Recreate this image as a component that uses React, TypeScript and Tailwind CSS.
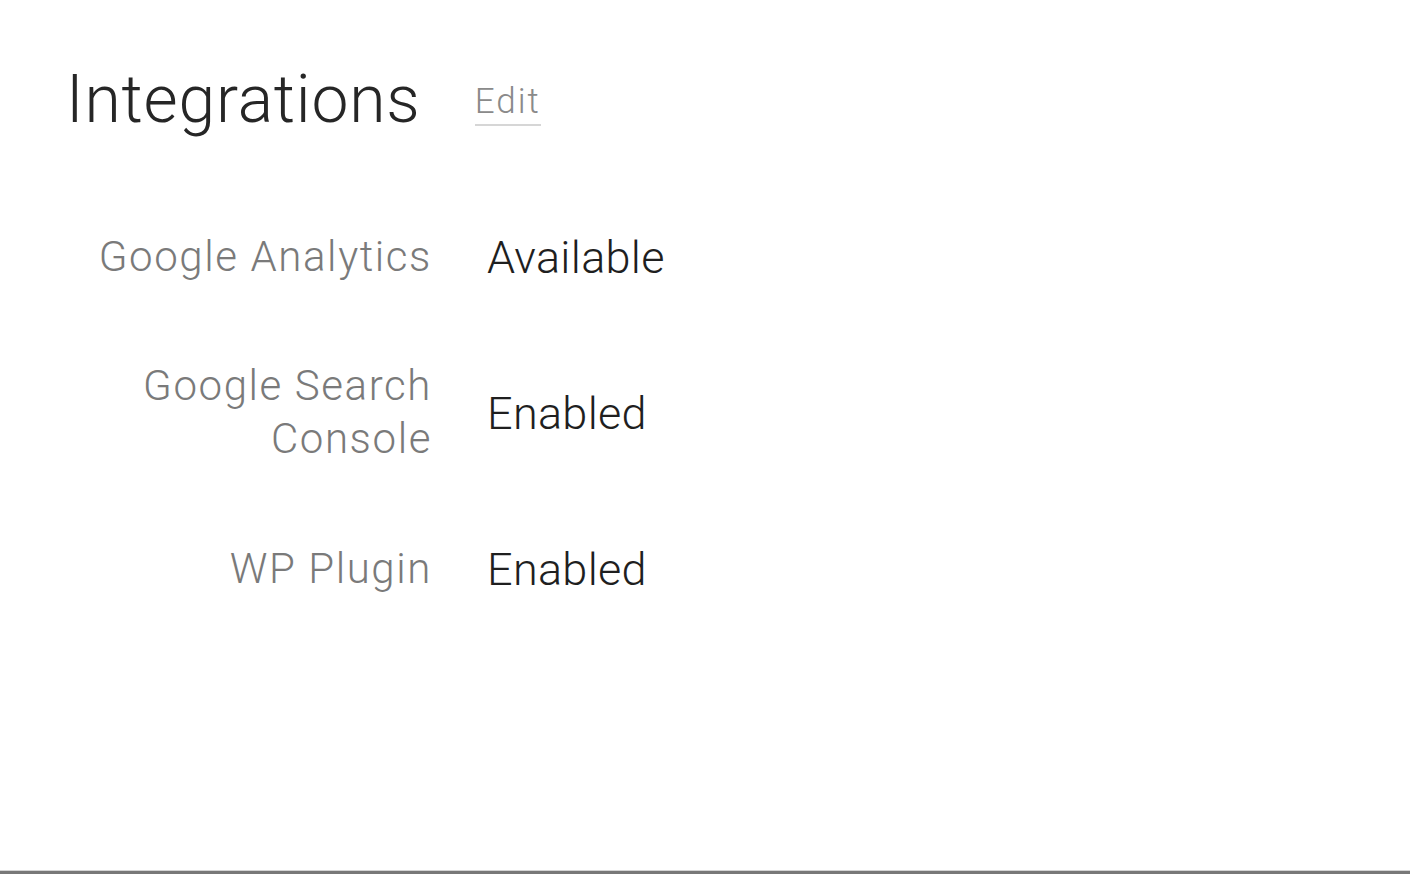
const rows = [
    { label: ["Google Analytics"], value: "Available" },
    { label: ["Google Search", "Console"], value: "Enabled" },
    { label: ["WP Plugin"], value: "Enabled" },
]

const App = () => {
    return <div className="h-[874px] w-full flex flex-col bg-white font-['Roboto',sans-serif]">
        <div className="flex-1 pl-[66px] pt-[62px]">
            <div className="flex items-center h-[76px]">
                <h1 className="text-[66px] leading-none font-light text-[#262626] tracking-[0.8px]">Integrations</h1>
                <a className="ml-[54px] mt-[10px] text-[35px] leading-none font-light text-[#8a8a8a] tracking-[2px] border-b-2 border-[#d6d6d6] pb-[5px]">Edit</a>
            </div>

            <div className="mt-[90px] flex flex-col gap-[75px]">
                {rows.map((row) => (
                    <div key={row.value + row.label[0]} className="flex items-center">
                        <div className="w-[366px] text-right text-[42px] leading-[53px] font-light text-[#7a7a7a] tracking-[1.6px]">
                            {row.label.map((l) => <div key={l}>{l}</div>)}
                        </div>
                        <div className="ml-[55px] mt-[3px] text-[45px] leading-[53px] font-light text-[#1f1f1f] tracking-[0.3px]">{row.value}</div>
                    </div>
                ))}
            </div>
        </div>
        <div className="h-[1px] bg-[#d4d4d4]" />
        <div className="h-[3px] bg-[#787878]" />
    </div>
}

export default App
